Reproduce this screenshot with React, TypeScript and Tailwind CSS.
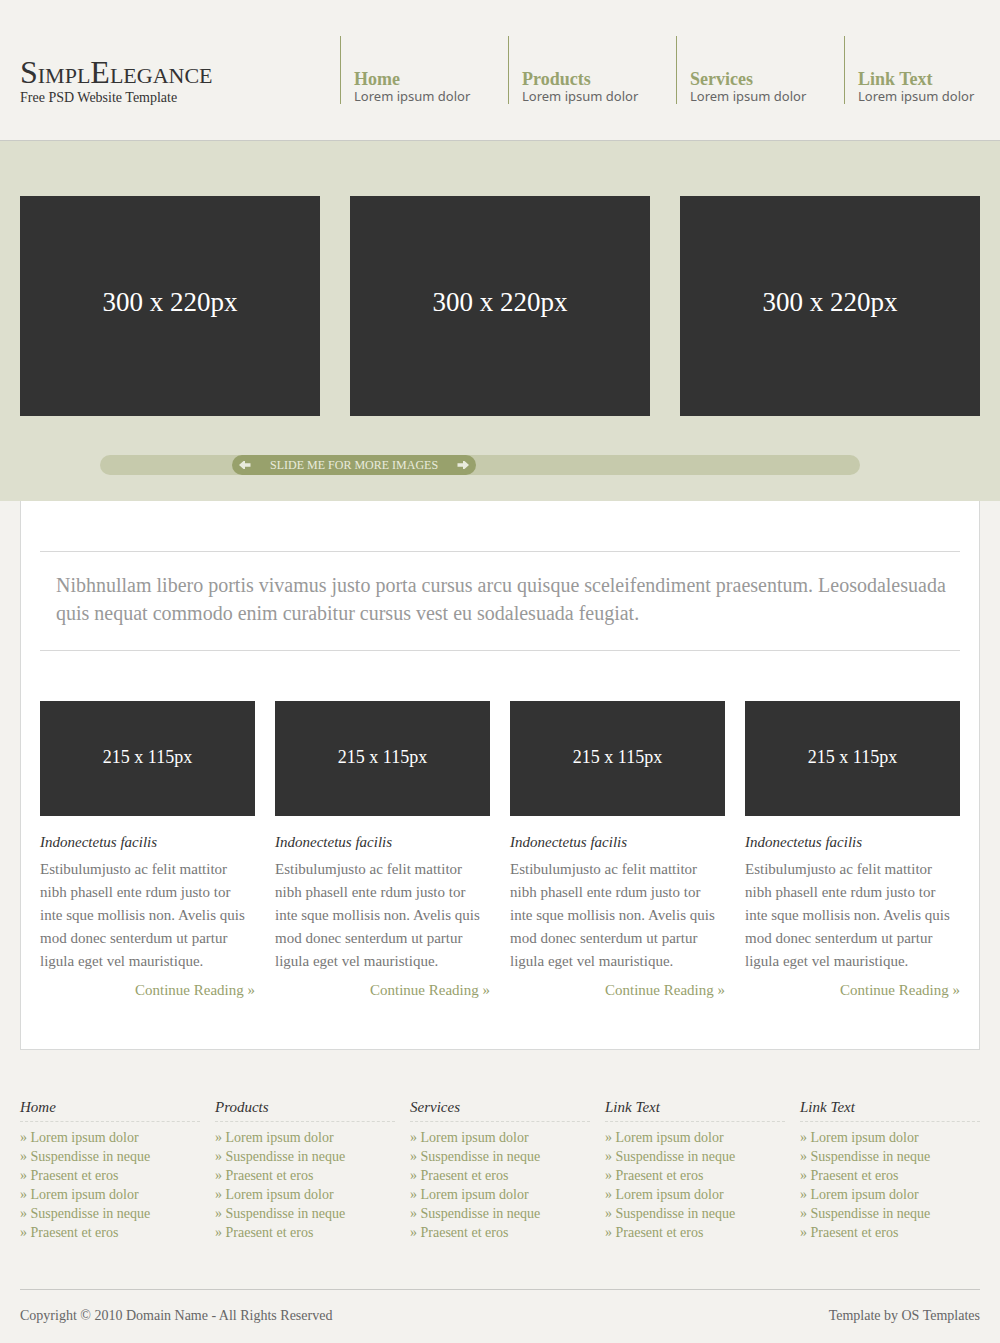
import { useState } from "react";

const navItems = ["Home", "Products", "Services", "Link Text"];
const footerGroups = ["Home", "Products", "Services", "Link Text", "Link Text"];
const footerLinks = [
  "Lorem ipsum dolor",
  "Suspendisse in neque",
  "Praesent et eros",
  "Lorem ipsum dolor",
  "Suspendisse in neque",
  "Praesent et eros",
];

function Arrow({ flip = false }: { flip?: boolean }) {
  return (
    <svg
      viewBox="0 0 12 8"
      className={flip ? "h-2 w-3 rotate-180" : "h-2 w-3"}
      fill="currentColor"
      aria-hidden="true"
    >
      <path d="M0 4 L4.5 0 H6 V2.2 H11.5 V5.8 H6 V8 H4.5 Z" />
    </svg>
  );
}

function Header() {
  return (
    <header className="border-b border-[#c9cac6]">
      <div className="flex items-start justify-between px-5 pt-9 pb-8">
        <div className="pt-5">
          <h1 className="text-[32px] leading-8 text-[#333333] [font-variant:small-caps]">
            <a href="#">SimplElegance</a>
          </h1>
          <p className="text-sm leading-5 text-[#333333]">Free PSD Website Template</p>
        </div>
        <nav className="w-2/3 pb-1">
          <ul className="grid grid-cols-4 gap-8">
            {navItems.map((item) => (
              <li key={item} className="border-l border-[#9aa36d] pt-[33px] pl-[13px] whitespace-nowrap">
                <a href="#" className="block text-lg leading-5 font-bold text-[#98a36e]">
                  {item}
                </a>
                <span className="block font-['Noto_Sans',sans-serif] text-[13px] leading-[15px] text-[#666666]">
                  Lorem ipsum dolor
                </span>
              </li>
            ))}
          </ul>
        </nav>
      </div>
    </header>
  );
}

function ImageSlider() {
  const [value, setValue] = useState(25.6);
  return (
    <div className="relative mr-30 ml-20 h-5 rounded-full bg-[#c6caac]">
      <div
        className="flex h-5 w-61 items-center justify-between rounded-full bg-[#98a16c] px-[7px] text-[#e9ebdd]"
        style={{ marginLeft: `calc((100% - 244px) * ${value / 100})` }}
      >
        <Arrow />
        <label htmlFor="slider" className="text-xs">
          SLIDE ME FOR MORE IMAGES
        </label>
        <Arrow flip />
      </div>
      <input
        id="slider"
        type="range"
        min={0}
        max={100}
        step={0.1}
        value={value}
        onChange={(e) => setValue(Number(e.target.value))}
        className="absolute inset-0 h-full w-full cursor-pointer opacity-0"
      />
    </div>
  );
}

function Gallery() {
  return (
    <section className="bg-[#dddfce] px-5 pt-[55px] pb-[26px]">
      <div className="mb-[39px] grid grid-cols-3 gap-[30px]">
        {[0, 1, 2].map((i) => (
          <div
            key={i}
            className="flex h-[220px] items-center justify-center bg-[#333333] pb-2 text-[27px] text-white"
          >
            300 x 220px
          </div>
        ))}
      </div>
      <ImageSlider />
    </section>
  );
}

function Article() {
  return (
    <article>
      <div className="flex h-[115px] items-center justify-center bg-[#333333] pb-1 text-lg text-white">
        215 x 115px
      </div>
      <h2 className="mt-4 text-[15px] leading-5 text-[#333333] italic">Indonectetus facilis</h2>
      <p className="mt-[6px] text-[15px] leading-[23px] text-[#777777]">
        Estibulumjusto ac felit mattitor nibh phasell ente rdum justo tor inte sque mollisis non. Avelis quis
        mod donec senterdum ut partur ligula eget vel mauristique.
      </p>
      <p className="mt-[6px] text-right text-[15px] leading-[23px]">
        <a href="#" className="text-[#98a16c]">
          Continue Reading »
        </a>
      </p>
    </article>
  );
}

function Footer() {
  return (
    <footer className="px-5 pt-[47px] text-sm">
      <div className="grid grid-cols-5 gap-[15px]">
        {footerGroups.map((title, i) => (
          <section key={i}>
            <h2 className="border-b border-dashed border-[#d8d9d3] pb-1 text-[15px] leading-5 text-[#333333] italic">
              {title}
            </h2>
            <ul className="mt-[6px] leading-[19px] text-[#98a16c]">
              {footerLinks.map((link, j) => (
                <li key={j}>
                  <a href="#">» {link}</a>
                </li>
              ))}
            </ul>
          </section>
        ))}
      </div>
      <div className="mt-[47px] flex justify-between border-t border-[#c9c9c6] pt-4 pb-[17px] leading-5 text-[#666666]">
        <p>Copyright © 2010 Domain Name - All Rights Reserved</p>
        <p>Template by OS Templates</p>
      </div>
    </footer>
  );
}

export default function App() {
  return (
    <div className="min-h-screen bg-[#f3f2ee] font-['Liberation_Serif',serif]">
      <Header />
      <Gallery />
      <main className="mx-5 border-x border-b border-[#d8d9d8] bg-white px-[19px] pt-[50px] pb-[47px]">
        <p className="mb-[50px] border-y border-[#d8d8d8] pt-[19px] pr-3 pb-[23px] pl-4 text-xl leading-7 text-[#999999]">
          Nibhnullam libero portis vivamus justo porta cursus arcu quisque sceleifendiment praesentum. Leosodalesuada
          quis nequat commodo enim curabitur cursus vest eu sodalesuada feugiat.
        </p>
        <div className="grid grid-cols-4 gap-5">
          {[0, 1, 2, 3].map((i) => (
            <Article key={i} />
          ))}
        </div>
      </main>
      <Footer />
    </div>
  );
}
